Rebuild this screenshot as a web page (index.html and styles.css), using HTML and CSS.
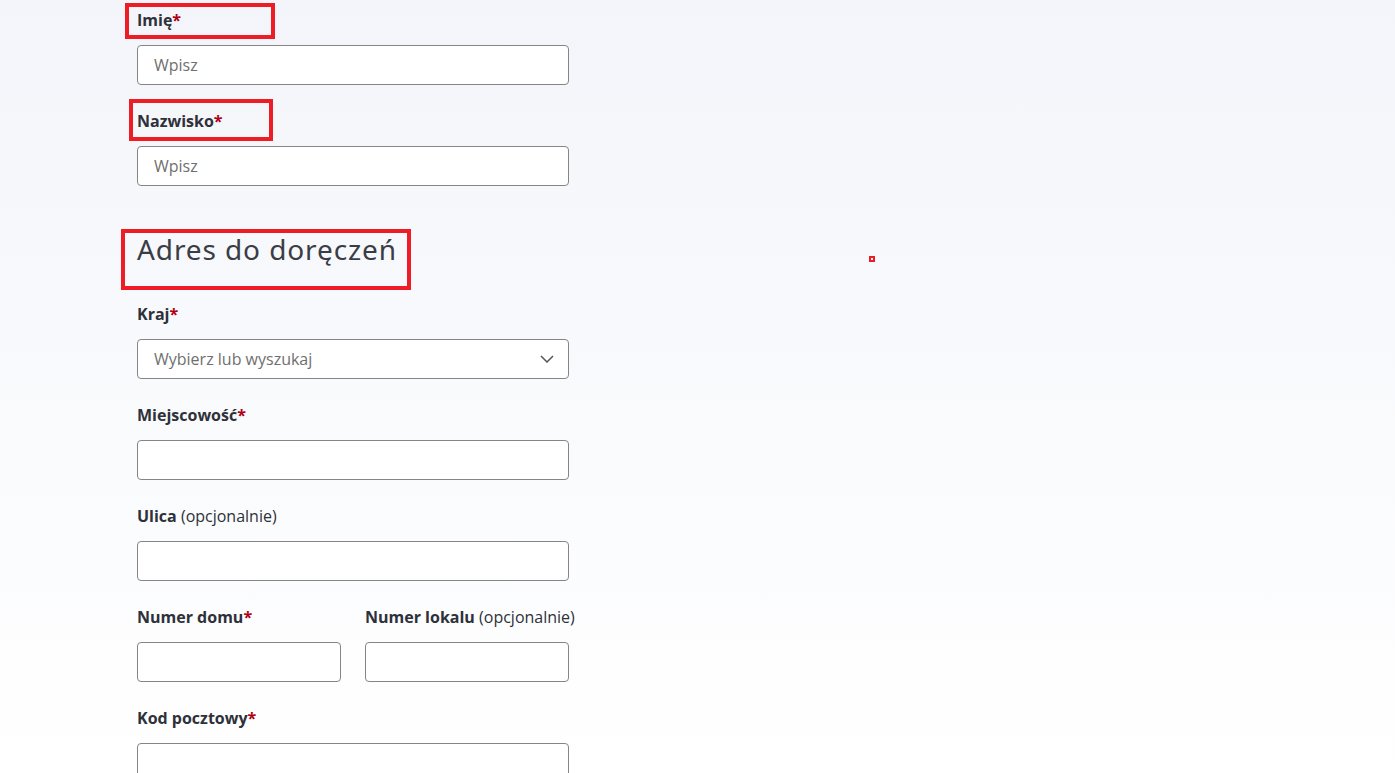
FILE: index.html
```html
<!DOCTYPE html>
<html lang="pl">
<head>
<meta charset="utf-8">
<title>Formularz</title>
<link rel="stylesheet" href="styles.css">
</head>
<body>
<div class="page">
  <form class="form">
    <div class="field">
      <label class="label">Imię<span class="req">*</span></label>
      <input class="input" type="text" placeholder="Wpisz">
    </div>
    <div class="field">
      <label class="label">Nazwisko<span class="req">*</span></label>
      <input class="input" type="text" placeholder="Wpisz">
    </div>
    <h2 class="heading">Adres do doręczeń</h2>
    <div class="field">
      <label class="label">Kraj<span class="req">*</span></label>
      <div class="select">
        <span class="select-text">Wybierz lub wyszukaj</span>
        <svg class="chev" width="14" height="8" viewBox="0 0 14 8"><path d="M1 1 L7 7 L13 1" fill="none" stroke="#555" stroke-width="1.5"/></svg>
      </div>
    </div>
    <div class="field">
      <label class="label">Miejscowość<span class="req">*</span></label>
      <input class="input" type="text">
    </div>
    <div class="field">
      <label class="label">Ulica <span class="opt">(opcjonalnie)</span></label>
      <input class="input" type="text">
    </div>
    <div class="row">
      <div class="field">
        <label class="label">Numer domu<span class="req">*</span></label>
        <input class="input" type="text">
      </div>
      <div class="field">
        <label class="label">Numer lokalu <span class="opt">(opcjonalnie)</span></label>
        <input class="input" type="text">
      </div>
    </div>
    <div class="field">
      <label class="label">Kod pocztowy<span class="req">*</span></label>
      <input class="input" type="text">
    </div>
  </form>
</div>
<div class="mark mark-1"></div>
<div class="mark mark-2"></div>
<div class="mark mark-3"></div>
<div class="mark mark-dot"></div>
</body>
</html>
```

FILE: styles.css
```css
html, body {
  margin: 0;
  padding: 0;
  height: 100%;
}
body {
  background: linear-gradient(180deg, #f3f5fa 0px, #ffffff 773px);
  font-family: "Open Sans", "Liberation Sans", sans-serif;
  color: #2e3139;
  overflow: hidden;
  position: relative;
}
.page {
  padding: 8px 0 0 137px;
}
.form {
  width: 432px;
}
.field {
  display: flex;
  flex-direction: column;
  margin-bottom: 24px;
  min-width: 0;
}
.label {
  font-size: 16px;
  font-weight: 700;
  line-height: 24px;
  margin-bottom: 13px;
  white-space: nowrap;
}
.req {
  color: #b00012;
}
.opt {
  font-weight: 400;
}
.input, .select {
  box-sizing: border-box;
  height: 40px;
  width: 100%;
  border: 1px solid #858585;
  border-radius: 4px;
  background: #fff;
  padding: 0 16px;
  font-family: "Open Sans", "Liberation Sans", sans-serif;
  font-size: 16px;
  color: #2e3139;
  outline: none;
  margin: 0;
}
.input::placeholder {
  color: #6f6f6f;
}
.select {
  display: flex;
  align-items: center;
  justify-content: space-between;
  padding-right: 14px;
}
.select-text {
  color: #6f6f6f;
}
.heading {
  font-family: "Noto Sans", "DejaVu Sans", sans-serif;
  font-weight: 400;
  font-size: 28px;
  line-height: 36px;
  letter-spacing: 0.9px;
  color: #3a3d45;
  margin: 45px 0 35px;
}
.row {
  display: grid;
  grid-template-columns: minmax(0, 1fr) minmax(0, 1fr);
  column-gap: 24px;
}
.mark {
  position: absolute;
  border: 4px solid #ee1c25;
  box-sizing: border-box;
}
.mark-1 { left: 125px; top: 3px; width: 150px; height: 36px; }
.mark-2 { left: 129px; top: 99px; width: 144px; height: 42px; }
.mark-3 { left: 121px; top: 229px; width: 290px; height: 61px; }
.mark-dot { left: 869px; top: 256px; width: 6px; height: 6px; border-width: 2px; }
```
